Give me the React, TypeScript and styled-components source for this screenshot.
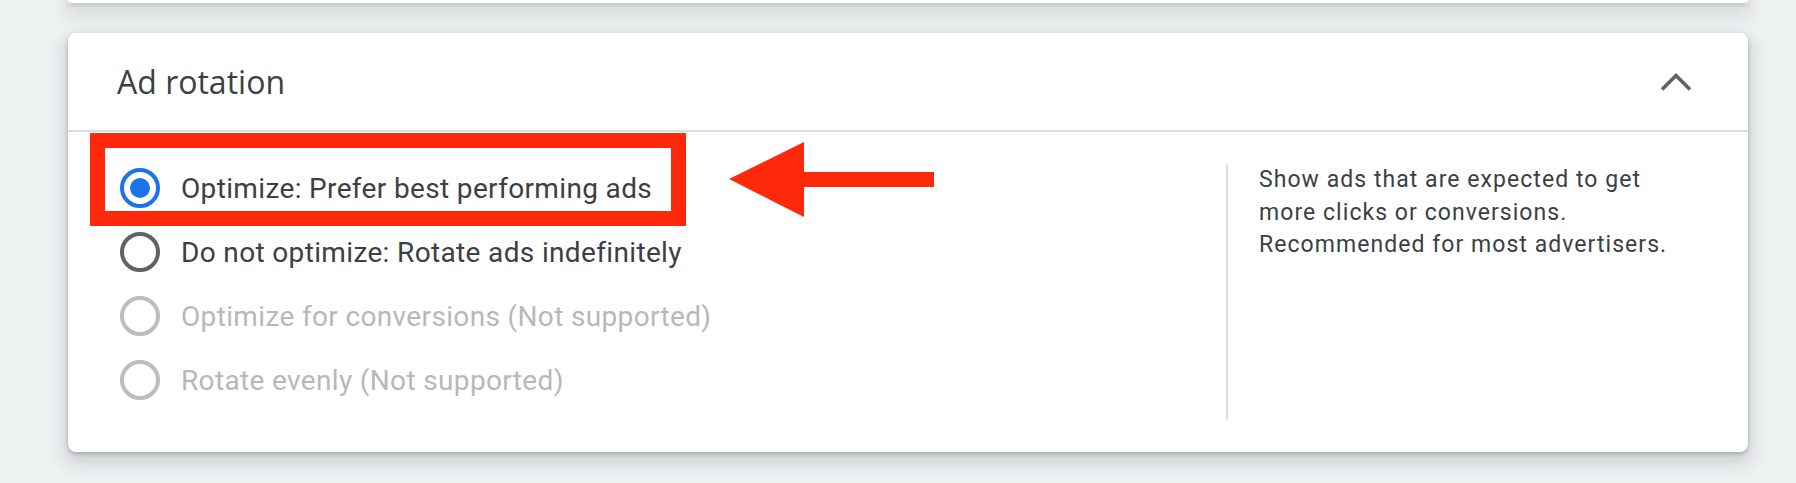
import React from 'react';
import styled, {createGlobalStyle} from "styled-components";

const GlobalStyle = createGlobalStyle`
    body {
        margin: 0;
        background: #eef1f2;
        font-family: Roboto, "Liberation Sans", sans-serif;
    }
`

type Option = {
    label: string
    state: 'selected' | 'normal' | 'disabled'
}

const options: Option[] = [
    {label: 'Optimize: Prefer best performing ads', state: 'selected'},
    {label: 'Do not optimize: Rotate ads indefinitely', state: 'normal'},
    {label: 'Optimize for conversions (Not supported)', state: 'disabled'},
    {label: 'Rotate evenly (Not supported)', state: 'disabled'},
]

const ChevronUp = () => (
    <svg width={32} height={20} viewBox="0 0 32 20">
        <polyline points="2,17.5 16,3.5 30,17.5" fill="none" stroke="#5f6368" strokeWidth={3.6}/>
    </svg>
)

const Arrow = () => (
    <svg width={205} height={75} viewBox="0 0 205 75">
        <polygon points="0,37 75,0 75,30 205,30 205,45 75,45 75,75" fill="#ff280a"/>
    </svg>
)

export default function App() {
    return (
        <>
            <GlobalStyle/>
            <Page>
                <PrevCard/>
                <Card>
                    <Header>
                        <Title>Ad rotation</Title>
                        <ChevronUp/>
                    </Header>
                    <Body>
                        <OptionList>
                            {options.map(o => (
                                <Row key={o.label}>
                                    <Radio state={o.state}>{o.state === 'selected' && <Dot/>}</Radio>
                                    <Label state={o.state}>{o.label}</Label>
                                </Row>
                            ))}
                        </OptionList>
                        <Aside>
                            <Description>
                                Show ads that are expected to get more clicks or conversions. Recommended for most advertisers.
                            </Description>
                        </Aside>
                    </Body>
                    <Highlight/>
                    <ArrowMark><Arrow/></ArrowMark>
                </Card>
            </Page>
        </>
    );
}

const Page = styled.div`
    width: 1796px;
    height: 483px;
    box-sizing: border-box;
    padding: 0 48px 0 68px;
    display: flex;
    flex-direction: column;
    overflow: hidden;
`

const shadow = `0 2px 4px rgba(60, 64, 67, 0.3), 0 8px 16px 4px rgba(60, 64, 67, 0.16)`

const PrevCard = styled.div`
    height: 3px;
    background: #fff;
    border-radius: 0 0 8px 8px;
    box-shadow: ${shadow};
`

const Card = styled.div`
    position: relative;
    margin-top: 30px;
    background: #fff;
    border-radius: 8px;
    box-shadow: ${shadow};
`

const Header = styled.div`
    height: 97px;
    padding: 0 56px 0 49px;
    display: flex;
    align-items: center;
    justify-content: space-between;
    border-bottom: 2px solid #dadce0;
`

const Title = styled.h2`
    margin: 0;
    font-family: "Open Sans", Roboto, sans-serif;
    font-weight: 400;
    font-size: 32px;
    color: #3c4043;
`

const Body = styled.div`
    display: flex;
    height: 320px;
`

const OptionList = styled.div`
    flex: 1;
    display: flex;
    flex-direction: column;
    padding: 24px 0 0 52px;
`

const Row = styled.div`
    height: 64px;
    display: flex;
    align-items: center;
    gap: 21px;
`

type StateProps = { state: Option['state'] }

const radioColor = {selected: '#1a73e8', normal: '#5f6368', disabled: '#bdbdbd'}

const Radio = styled.div<StateProps>`
    width: 40px;
    height: 40px;
    box-sizing: border-box;
    border-radius: 50%;
    border: 4px solid ${p => radioColor[p.state]};
    display: flex;
    align-items: center;
    justify-content: center;
`

const Dot = styled.div`
    width: 20px;
    height: 20px;
    border-radius: 50%;
    background: #1a73e8;
`

const Label = styled.span<StateProps>`
    font-size: 28px;
    letter-spacing: 0.35px;
    color: ${p => p.state === 'disabled' ? '#b8b8b8' : '#3c4043'};
`

const Aside = styled.div`
    flex: 0 0 522px;
    box-sizing: border-box;
    margin: 32px 0;
    border-left: 2px solid #dadce0;
    padding: 0 70px 0 31px;
`

const Description = styled.p`
    margin: 0;
    font-size: 23px;
    line-height: 32.5px;
    letter-spacing: 1.05px;
    color: #3c4043;
`

const Highlight = styled.div`
    position: absolute;
    left: 22px;
    top: 100px;
    width: 596px;
    height: 93px;
    box-sizing: border-box;
    border: 15px solid #ff280a;
`

const ArrowMark = styled.div`
    position: absolute;
    left: 661px;
    top: 109px;
    line-height: 0;
`
